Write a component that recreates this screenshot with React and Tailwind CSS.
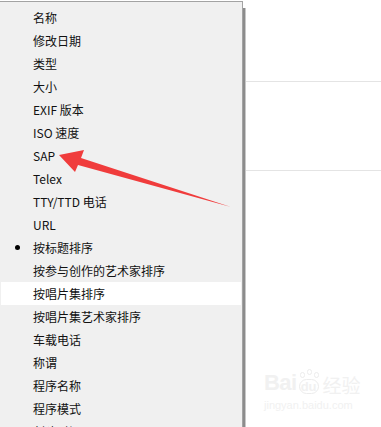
import React from "react";

const items = [
  "名称",
  "修改日期",
  "类型",
  "大小",
  "EXIF 版本",
  "ISO 速度",
  "SAP",
  "Telex",
  "TTY/TTD 电话",
  "URL",
  "按标题排序",
  "按参与创作的艺术家排序",
  "按唱片集排序",
  "按唱片集艺术家排序",
  "车载电话",
  "称谓",
  "程序名称",
  "程序模式",
  "创建时间",
];

export default function App() {
  return (
    <div
      className="relative w-[381px] h-[427px] overflow-hidden bg-white flex"
      style={{ fontFamily: '"Noto Sans CJK SC", "Noto Sans", sans-serif' }}
    >
      <div className="w-[243px] shrink-0 mt-[1px] border-t border-r border-[#a3a3a3] bg-[#f0f0f0] pt-[4px]">
        {items.map((t, i) => (
          <div
            key={i}
            className={`relative h-[23px] ml-[1px] mr-[1px] flex items-center pl-[32px] text-[12px] text-[#111] ${
              i === 12 ? "bg-white" : ""
            }`}
          >
            {i === 10 && (
              <span className="absolute left-[14px] top-[9px] w-[5px] h-[5px] rounded-full bg-black" />
            )}
            <span className="leading-none">{t}</span>
          </div>
        ))}
      </div>
      <div className="w-[3px] shrink-0 mt-[8px] flex">
        <div className="w-[2px] bg-[#8c8c8c]" />
        <div className="w-[1px] bg-[#c8c8c8]" />
      </div>
      <div className="flex-1 flex flex-col">
        <div className="h-[81px]" />
        <div className="h-[1px] bg-[#e4e4e4]" />
        <div className="h-[88px]" />
        <div className="h-[1px] bg-[#e4e4e4]" />
      </div>

      <svg
        className="absolute left-0 top-0 pointer-events-none"
        width="381"
        height="427"
        viewBox="0 0 381 427"
      >
        <polygon
          points="59,155 84,150 81,158 231,207 78,165 75,172"
          fill="#f03c3c"
        />
      </svg>

      <div className="absolute left-[264px] top-[372px] text-[#f1f1f1] leading-none pointer-events-none">
        <div className="flex items-end">
          <span className="text-[22px] font-bold tracking-tight" style={{ fontFamily: '"Liberation Sans", sans-serif' }}>Bai</span>
          <span className="relative mx-[1px] w-[22px] h-[22px] flex items-end justify-center">
            <span className="absolute left-[2px] top-[0px] w-[5px] h-[6px] rounded-full border border-[#ececec]" />
            <span className="absolute left-[9px] top-[-3px] w-[5px] h-[6px] rounded-full border border-[#ececec]" />
            <span className="absolute left-[16px] top-[0px] w-[5px] h-[6px] rounded-full border border-[#ececec]" />
            <span className="text-[13px] font-bold rounded-full border border-[#ececec] px-[1px]" style={{ fontFamily: '"Liberation Sans", sans-serif' }}>du</span>
          </span>
          <span className="text-[19px] ml-[2px]" style={{ fontFamily: '"Noto Sans CJK SC", sans-serif' }}>经验</span>
        </div>
        <div className="text-[11px] mt-[6px]" style={{ fontFamily: '"Liberation Sans", sans-serif' }}>jingyan.baidu.com</div>
      </div>
    </div>
  );
}
